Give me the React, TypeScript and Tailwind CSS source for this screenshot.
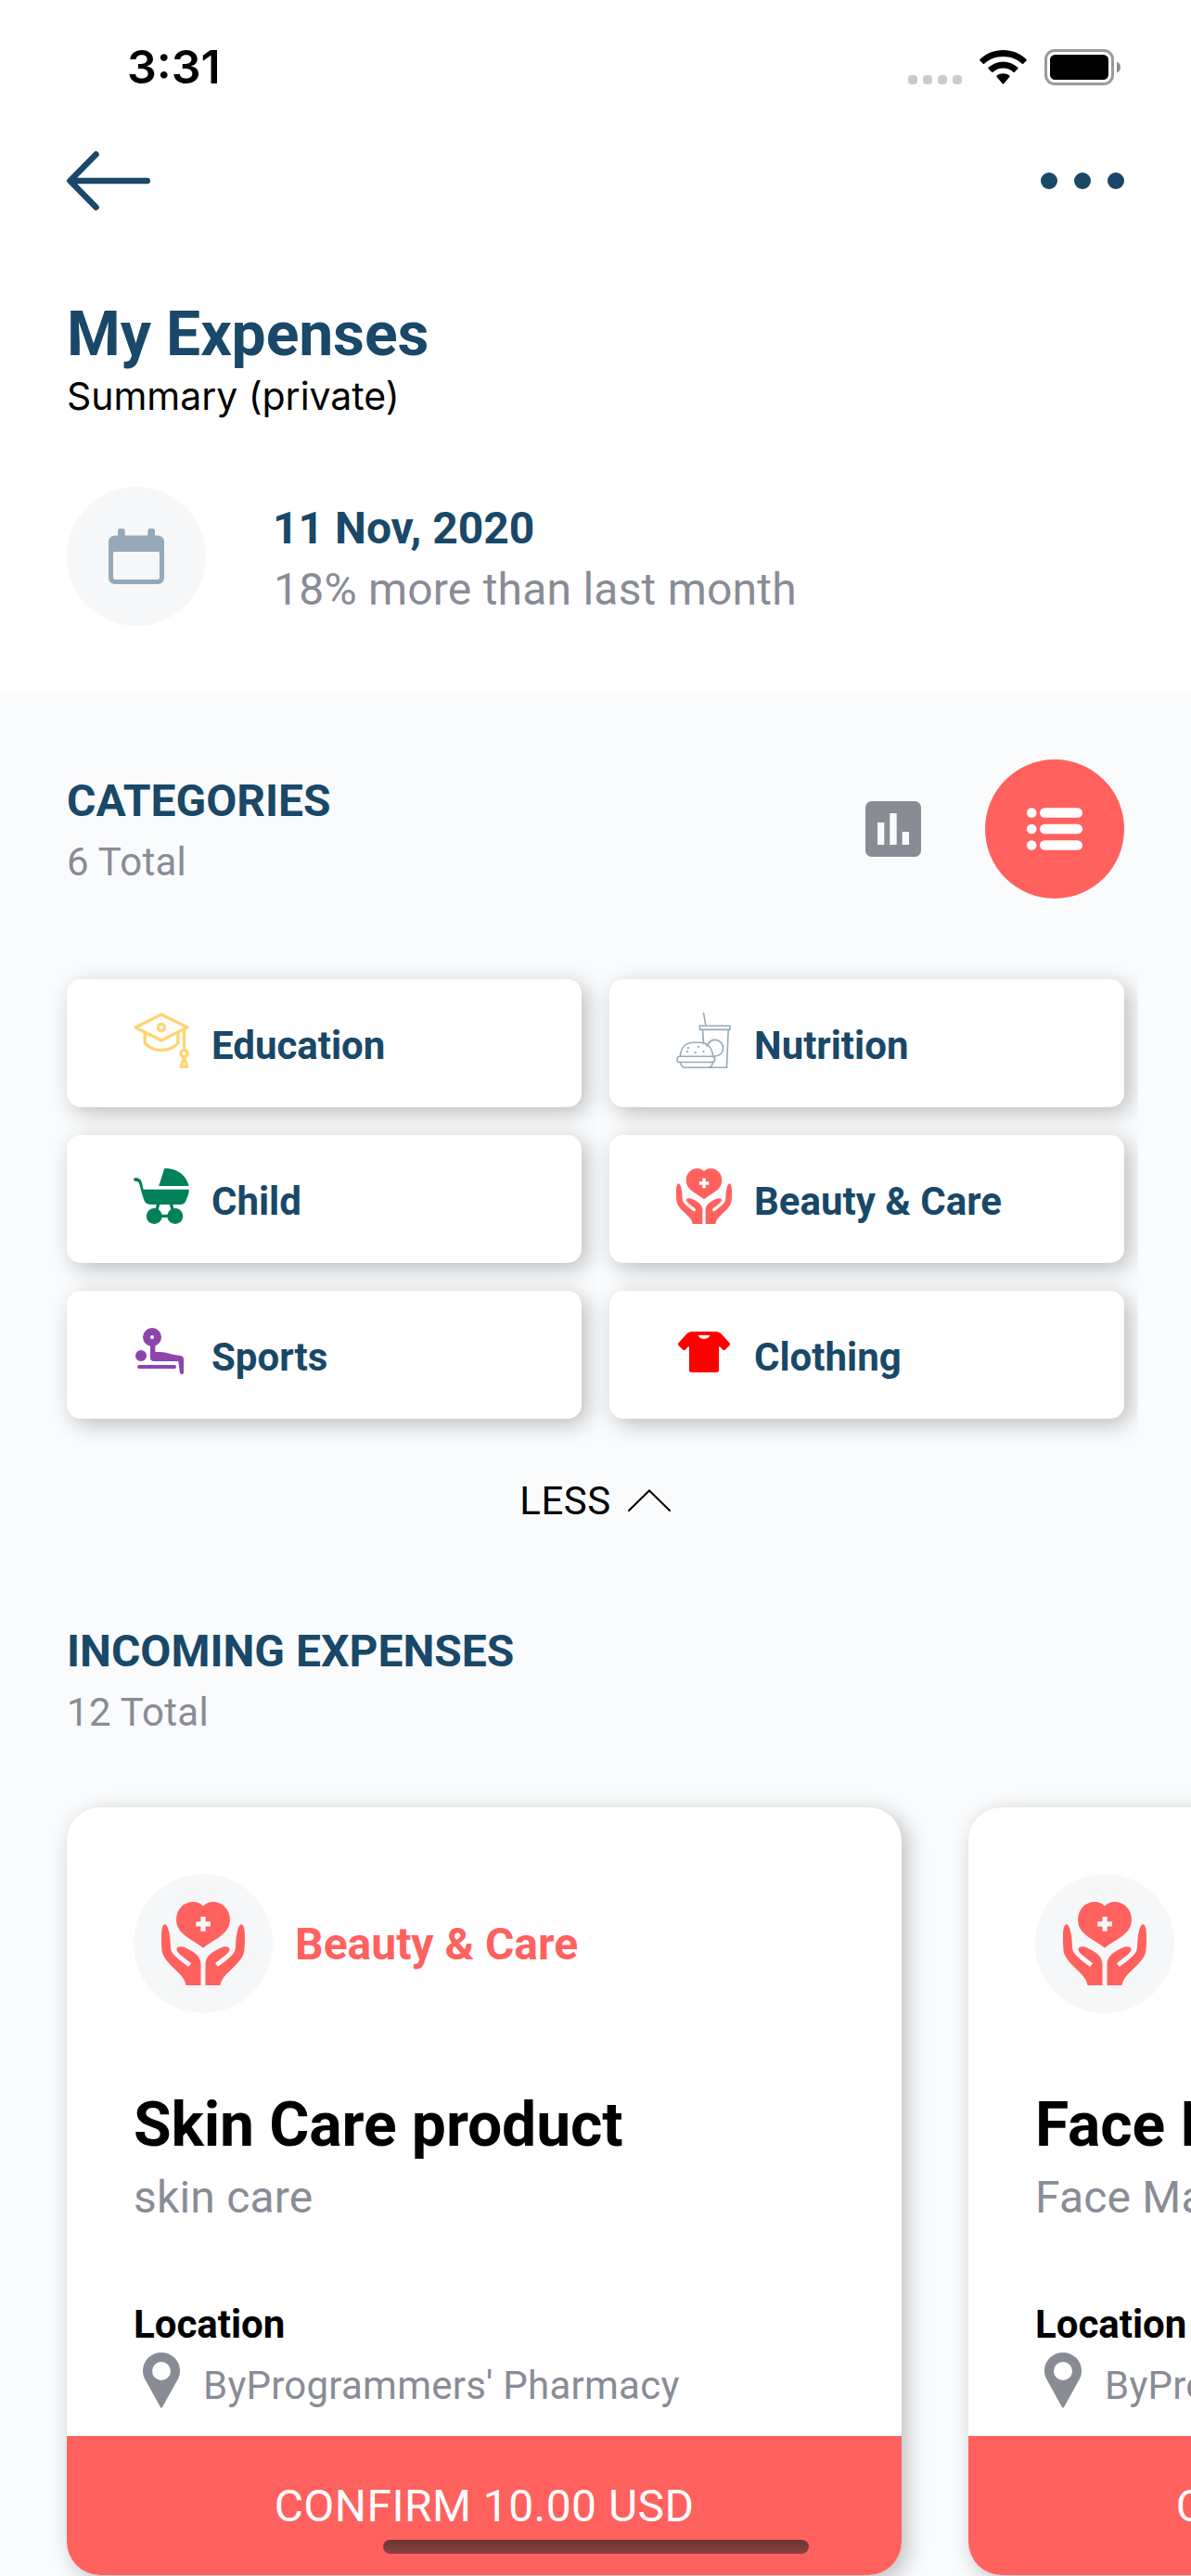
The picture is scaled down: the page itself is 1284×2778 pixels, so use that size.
import React from "react";

type IconProps = { className?: string };

const Cap = ({ className }: IconProps) => (
  <svg viewBox="0 0 60 60" className={className} fill="none" stroke="#FFD573" strokeWidth="3.4" strokeLinejoin="round" strokeLinecap="round">
    <path d="M30 2 58 16 30 30 2 16Z" />
    <ellipse cx="30" cy="16" rx="3.6" ry="3.8" strokeWidth="3.2" />
    <path d="M12.2 22V33C21 43 39 43 47.8 33V22" strokeLinecap="butt" />
    <path d="M54.5 18V39" />
    <circle cx="54.5" cy="44" r="3.7" />
    <path d="M54.5 48.5 51.2 58.3H57.9Z" />
  </svg>
);

const Food = ({ className }: IconProps) => (
  <svg viewBox="0 0 60 60" className={className} fill="none" stroke="#95A9B8" strokeWidth="1.6">
    <path d="M29.4 0 32 13.8" />
    <path d="M25.4 14.2H58V18.4H25.4Z" />
    <path d="M28.6 18.4 29.5 34M56.2 18.4 54.5 59.3H9.6C6.5 59.3 5 56.5 4.3 53.6" />
    <path d="M32.8 36.6C35 31.5 37.5 29.4 41.5 29.4C47 29.4 50.6 33.6 50.6 38.5C50.6 43.8 46.5 47 41.5 47H39.4" />
    <path d="M4.4 47C4.9 37.5 10.5 32.2 19 32.2H25C33 32.2 39 37.5 39.5 47" />
    <rect x="1" y="47.3" width="40.8" height="6.2" rx="3.1" />
    <path d="M39.5 53.6C39 57 37.2 59.3 34.6 59.3" />
    <path d="M13 37v2M23.8 36v2M11.8 41v2M20.6 42v2M29.4 41v2" strokeWidth="1.9" />
  </svg>
);

const Stroller = ({ className }: IconProps) => (
  <svg viewBox="0 0 60 60" className={className} fill="#008159">
    <path d="M33.3 0C46 -.8 57.2 7.5 59.5 19H27.2Z" />
    <path d="M1.8 10.2C6 9.8 8.2 12 9 15.4L10.6 22.8H59.8C59.8 28 57.8 31 56.6 34.4C55.6 37.4 53.6 39 50.5 39H18C14.6 39 12.3 37.4 11.4 34.6C9.4 29 8 23 6.2 16.8C5.6 14.8 4.6 13.9 2.4 14C-.6 14-.6 10.4 1.8 10.2Z" />
    <path d="M26.8 38 24.8 45M40.2 38 42.2 45M26 51.4H41" stroke="#008159" strokeWidth="3.4" fill="none" />
    <circle cx="22.3" cy="51.4" r="8.5" />
    <circle cx="44.8" cy="51.4" r="8.5" />
  </svg>
);

const Care = ({ className }: IconProps) => (
  <svg viewBox="0 0 90 90" className={className} fill="#FF615F">
    <path
      fillRule="evenodd"
      d="M45 4.6C48.500 1 52 0 55.500 0C66 0 73.900 8 73.900 19C73.900 35 58 39.500 45 49.700C32 39.500 16.100 35 16.100 19C16.100 8 24 0 34.500 0C38 0 41.500 1 45 4.600ZM42.400 16V21.200H37.200V26.600H42.400V31.800H47.700V26.600H52.900V21.200H47.700V16Z"
    />
    <path d="M3.500 24.200C1.500 24.200 0 29 0 37C0 46 .2 52 1.300 55.800C4 63.500 10.500 68.500 17.500 75.500C21.500 79.500 25.600 84 26.500 90H42.500V67C42.500 59 35.500 53.800 26 49.500C20.500 47.200 16.300 48.500 16.500 51.500C16.900 55.500 23.500 59.300 32 66.300L29.200 70C23 65.500 13.600 58.500 11.300 54C9 49.500 10.600 43.500 8.500 33.500C7.300 27.500 5.800 24.200 3.500 24.200Z" />
    <path d="M86.500 24.200C88.500 24.200 90 29 90 37C90 46 89.800 52 88.700 55.800C86 63.500 79.500 68.500 72.500 75.500C68.500 79.500 64.400 84 63.500 90H47.500V67C47.500 59 54.500 53.800 64 49.500C69.500 47.200 73.700 48.500 73.500 51.500C73.100 55.500 66.500 59.300 58 66.300L60.800 70C67 65.500 76.400 58.500 78.700 54C81 49.500 79.400 43.500 81.500 33.500C82.700 27.500 84.200 24.200 86.500 24.200Z" />
  </svg>
);

const Bench = ({ className }: IconProps) => (
  <svg viewBox="0 0 60 60" className={className} fill="#8E44AD">
    <path fillRule="evenodd" d="M20 4a10 10 0 1 0 0 20a10 10 0 1 0 0-20ZM20 12a2 2 0 1 1 0 4a2 2 0 1 1 0-4Z" />
    <circle cx="8" cy="34" r="6" />
    <path d="M18 22H23.400V30H29C35 30 42 33.400 49.500 33.800C52.500 34 54 35.500 54 38V52.200C54 54.500 50.200 54.700 49.900 52.300L48.300 40H22C19.300 40 18 38.600 18 36Z" />
    <rect x="4" y="44" width="42" height="4" rx="2" />
  </svg>
);

const Shirt = ({ className }: IconProps) => (
  <svg viewBox="0 0 60 60" className={className} fill="#FF0000">
    <path
      fillRule="evenodd"
      d="M17.500 8H42.500C45.500 8 47.800 9.300 49.600 11.500L57.300 20C58.300 21.100 58.200 22 57.400 23L52.800 27.500C51.900 28.400 51 28.300 50.100 27.400L47.300 24.600C46.500 23.900 46 24 46 25V49.500C46 51.200 45.200 52 43.500 52H16.500C14.800 52 14 51.200 14 49.500V25C14 24 13.500 23.900 12.700 24.600L9.900 27.400C9 28.300 8.100 28.400 7.200 27.500L2.600 23C1.800 22 1.700 21.100 2.700 20L10.400 11.500C12.200 9.300 14.500 8 17.500 8ZM23.700 12C25.500 17.300 34.500 17.300 36.300 12Z"
    />
  </svg>
);

const Pin = ({ className }: IconProps) => (
  <svg viewBox="0 0 60 60" className={className} fill="#898C95">
    <path
      fillRule="evenodd"
      d="M30 0C18.800 0 10 8.800 10 19.800C10 23 10.700 25.600 12 28.200L29 59C29.500 60 30.500 60 31 59L48 28.200C49.300 25.600 50 23 50 19.800C50 8.800 41.200 0 30 0ZM30 10A10 10 0 1 1 30 30A10 10 0 1 1 30 10Z"
    />
  </svg>
);

const StatusBar = () => (
  <div className="flex h-[144px] items-start pt-[41px] pr-[76px] pl-[137px]">
    <span className="grow font-['Inter'] text-[50px] leading-[62px] font-semibold text-black">3:31</span>
    <div className="mt-[40px] flex gap-[5.500px]">
      {[0, 1, 2, 3].map((i) => (
        <i key={i} className="h-[10px] w-[10.500px] rounded-[4px] bg-[#CBCBCB]" />
      ))}
    </div>
    <svg viewBox="0 0 51 37" className="mt-[13px] ml-[19px] h-[37px] w-[51px]" fill="#000">
      <path d="M25.500 0C35 0 44 3.600 50.500 10C51 10.500 51 10.900 50.500 11.400L47.200 14.800C46.800 15.200 46.300 15.200 45.900 14.800C40.500 9.700 33.200 7 25.500 7C17.800 7 10.500 9.700 5.100 14.800C4.700 15.200 4.200 15.200 3.800 14.800L.5 11.400C0 10.900 0 10.500 .5 10C7 3.600 16 0 25.500 0Z" />
      <path d="M25.500 12.500C31.500 12.500 37 14.800 41.300 18.800C41.800 19.300 41.800 19.700 41.300 20.200L37.800 23.700C37.400 24.100 36.900 24.100 36.500 23.700C33.500 21 29.700 19.500 25.500 19.500C21.300 19.500 17.500 21 14.500 23.700C14.100 24.100 13.600 24.100 13.200 23.700L9.700 20.200C9.200 19.700 9.200 19.300 9.700 18.800C14 14.800 19.500 12.500 25.500 12.500Z" />
      <path d="M25.500 25.300C28 25.300 30.500 26.100 32.300 27.600C32.800 28 32.800 28.500 32.400 28.900L26.200 36.200C25.800 36.700 25.200 36.700 24.800 36.200L18.600 28.900C18.200 28.500 18.200 28 18.700 27.600C20.500 26.100 23 25.300 25.500 25.300Z" />
    </svg>
    <svg viewBox="0 0 82 39" className="mt-[12px] ml-[19px] h-[39px] w-[82px]">
      <rect x="1.500" y="1.500" width="72" height="36" rx="9.500" fill="none" stroke="#9A9A9A" strokeWidth="3" />
      <rect x="6" y="6" width="63" height="27" rx="5.500" fill="#000" />
      <path d="M78 13.500C80.500 14.500 82 16.800 82 19.500C82 22.200 80.500 24.500 78 25.500Z" fill="#8C8C8C" />
    </svg>
  </div>
);

const categories = [
  { name: "Education", Icon: Cap },
  { name: "Nutrition", Icon: Food },
  { name: "Child", Icon: Stroller },
  { name: "Beauty & Care", Icon: Care },
  { name: "Sports", Icon: Bench },
  { name: "Clothing", Icon: Shirt },
];

const expenses = [
  { title: "Skin Care product", desc: "skin care", amount: "10.00" },
  { title: "Face Mask", desc: "Face Mask", amount: "50.00" },
];

const SectionTitle = ({ title, total }: { title: string; total: string }) => (
  <div className="grow">
    <h2 className="text-[48px] leading-[66px] font-bold text-[#194868]">{title}</h2>
    <p className="text-[42px] leading-[66px] tracking-[0.3px] text-[#898C95]">{total}</p>
  </div>
);

export default function App() {
  return (
    <div className="relative h-[2778px] w-[1284px] overflow-hidden bg-[#FAFBFD] font-['Roboto',sans-serif] whitespace-nowrap">
      <header className="h-[747px] bg-white">
        <StatusBar />
        <nav className="flex h-[102px] items-center justify-between px-[72px]">
          <svg viewBox="0 0 90 66" className="h-[66px] w-[90px]" fill="none" stroke="#194868" strokeWidth="6.600" strokeLinecap="round" strokeLinejoin="round">
            <path d="M31.500 4.500 3.500 33 31.500 61.500M4 33H86.700" />
          </svg>
          <svg viewBox="0 0 90 18" className="h-[18px] w-[90px]" fill="#194868">
            <circle cx="9" cy="9" r="9" />
            <circle cx="45" cy="9" r="9" />
            <circle cx="81" cy="9" r="9" />
          </svg>
        </nav>
        <div className="px-[72px] pt-[70px]">
          <h1 className="text-[66px] leading-[90px] font-bold tracking-[-0.1px] text-[#194868]">My Expenses</h1>
          <p className="-mt-[4px] font-['Inter'] text-[41px] leading-[50px] tracking-[-0.05px] text-black">Summary (private)</p>
        </div>
        <div className="mt-[73px] flex gap-[72px] px-[72px]">
          <div className="flex size-[150px] items-center justify-center rounded-full bg-[#F5F7F9]">
            <svg viewBox="0 0 60 60" className="size-[60px]" fill="#95A9B8">
              <path
                fillRule="evenodd"
                d="M10 7.500V2.500Q10 0 12.500 0H15.200Q17.700 0 17.700 2.500V7.500H42.300V2.500Q42.300 0 44.800 0H47.500Q50 0 50 2.500V7.500H52.500Q60 7.500 60 15V52.500Q60 60 52.500 60H7.500Q0 60 0 52.500V15Q0 7.500 7.500 7.500ZM6.500 25Q5 25 5 26.500V52.500Q5 55 7.500 55H52.500Q55 55 55 52.500V26.500Q55 25 53.500 25Z"
              />
            </svg>
          </div>
          <div className="pt-[12px]">
            <p className="text-[48px] leading-[66px] font-bold text-[#194868]">11 Nov, 2020</p>
            <p className="pl-px text-[48px] leading-[66px] tracking-[0.22px] text-[#898C95]">18% more than last month</p>
          </div>
        </div>
      </header>

      <section className="flex items-start px-[72px] pt-[72px]">
        <div className="grow pt-[12px]">
          <SectionTitle title="CATEGORIES" total="6 Total" />
        </div>
        <button className="mr-[24px] flex size-[150px] items-center justify-center">
          <svg viewBox="0 0 60 60" className="size-[60px]">
            <rect width="60" height="60" rx="6.700" fill="#898C95" />
            <path d="M13 23h7.300v24H13ZM26.300 13h7.400v34h-7.400ZM39.700 33H47v14h-7.300Z" fill="#FAFBFD" />
          </svg>
        </button>
        <button className="flex size-[150px] items-center justify-center rounded-full bg-[#FF615F]">
          <svg viewBox="0 0 60 60" className="size-[60px]" fill="#fff">
            {[12.5, 30, 47.5].map((y) => (
              <g key={y}>
                <circle cx="5.200" cy={y} r="5.300" />
                <rect x="14" y={y - 5.3} width="46" height="10.600" rx="5.300" />
              </g>
            ))}
          </svg>
        </button>
      </section>

      <div className="-mt-[8px] w-[1227px] overflow-hidden pt-[95px] pb-[30px] pl-[72px]">
        <div className="grid w-[1140px] grid-cols-2 gap-[30px]">
          {categories.map(({ name, Icon }) => (
            <div key={name} className="flex h-[138px] items-start gap-[24px] rounded-[15px] bg-white px-[72px] pt-[36px] shadow-[6px_6px_23px_rgba(0,0,0,0.25)]">
              <Icon className="size-[60px]" />
              <span className="pt-[3px] text-[42px] leading-[66px] font-bold text-[#194868]">{name}</span>
            </div>
          ))}
        </div>
      </div>

      <button className="mx-auto mt-[26px] flex items-center">
        <span className="text-[42px] leading-[66px] tracking-[0.5px] text-black">LESS</span>
        <svg viewBox="0 0 48 26" className="mt-[-3px] ml-[17px] h-[26px] w-[48px]" fill="none" stroke="#000" strokeWidth="2" strokeLinecap="round">
          <path d="M2 24 24 2.500 46 24" />
        </svg>
      </button>

      <section className="px-[72px] pt-[96px]">
        <SectionTitle title="INCOMING EXPENSES" total="12 Total" />
      </section>

      <div className="flex gap-[72px] pt-[69px] pl-[72px]">
        {expenses.map((e) => (
          <article key={e.title} className="h-[828px] w-[900px] shrink-0 rounded-[36px] bg-white shadow-[6px_6px_23px_rgba(0,0,0,0.25)]">
            <div className="h-[678px] px-[72px] pt-[72px]">
              <div className="flex items-center">
                <div className="flex size-[150px] items-center justify-center rounded-full bg-[#F5F7F9]">
                  <Care className="size-[90px]" />
                </div>
                <span className="ml-[24px] pt-[2px] text-[48px] leading-[66px] font-bold text-[#FF615F]">Beauty &amp; Care</span>
              </div>
              <h3 className="mt-[76px] text-[66px] leading-[90px] font-bold tracking-[-0.1px] text-black">{e.title}</h3>
              <p className="text-[48px] leading-[66px] tracking-[0.2px] text-[#898C95]">{e.desc}</p>
              <p className="mt-[71px] text-[42px] leading-[66px] font-bold text-black">Location</p>
              <div className="flex">
                <Pin className="-mt-[3px] size-[60px]" />
                <span className="ml-[15px] text-[42px] leading-[66px] tracking-[0.24px] text-[#898C95]">ByProgrammers' Pharmacy</span>
              </div>
            </div>
            <button className="flex h-[150px] w-full items-center justify-center rounded-b-[36px] bg-[#FF615F] pt-[2px] text-[48px] tracking-[0.45px] text-white">
              CONFIRM {e.amount} USD
            </button>
          </article>
        ))}
      </div>

      <div className="absolute bottom-[24px] left-[413px] h-[15px] w-[459px] rounded-full bg-linear-to-b from-[#683535] to-[#8E4141]" />
    </div>
  );
}
